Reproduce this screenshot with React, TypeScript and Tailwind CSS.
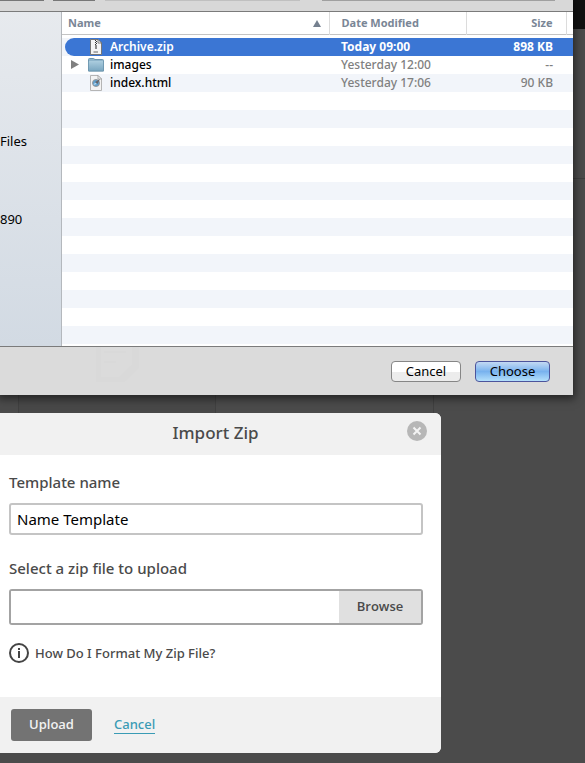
import type { ReactNode } from "react";

function ZipIcon() {
  return (
    <svg width="16" height="16" viewBox="0 0 16 16" aria-hidden="true">
      <path d="M2.5 .5h7.500l3.500 3.500v11.500h-11z" fill="#f4f4f4" stroke="#777" />
      <path d="M10 .5v3.500h3.500z" fill="#fff" stroke="#666" strokeWidth=".8" />
      <path d="M7 1h1v1H7zM8 2h1v1H8zM7 3h1v1H7zM8 4h1v1H8zM7 5h1v1H7z" fill="#333" />
      <path d="M7 6h2v4H7z" fill="#8a8a8a" />
      <path d="M5.500 13h4.500" stroke="#666" />
    </svg>
  );
}

function FolderIcon() {
  return (
    <svg width="16" height="16" viewBox="0 0 16 16" aria-hidden="true">
      <defs>
        <linearGradient id="folder" x1="0" y1="0" x2="0" y2="1">
          <stop offset="0" stopColor="#a9cbdd" />
          <stop offset="1" stopColor="#79a6c0" />
        </linearGradient>
      </defs>
      <path d="M.5 14V2.500q0-1 1-1h4q1 0 1 1h8q1 0 1 1V14z" fill="#8fb5cb" stroke="#6c95ae" />
      <path d="M.5 4.500h15V14H.5z" fill="url(#folder)" stroke="#6c95ae" strokeWidth=".7" />
      <path d="M1 4.500h14" stroke="#a9cbdd" />
    </svg>
  );
}

function HtmlIcon() {
  return (
    <svg width="16" height="16" viewBox="0 0 16 16" aria-hidden="true">
      <path d="M2.500 .5h7.500l3.500 3.500v11.500h-11z" fill="#f3f3f3" stroke="#b5b5b5" />
      <path d="M10 .5v3.500h3.500z" fill="#fff" stroke="#999" strokeWidth=".8" />
      <circle cx="8" cy="8" r="3.500" fill="#5a9fd0" stroke="#9a9a9a" />
      <path d="M5.500 10L7 7.500l2 1.500z" fill="#b9d9ee" />
      <path d="M7 7l5-3-2.500 5z" fill="#66666c" />
    </svg>
  );
}

type FileRow = {
  name: string;
  date: string;
  size: string;
  icon: ReactNode;
  folder?: boolean;
  selected?: boolean;
};

const files: FileRow[] = [
  { name: "Archive.zip", date: "Today 09:00", size: "898 KB", icon: <ZipIcon />, selected: true },
  { name: "images", date: "Yesterday 12:00", size: "--", icon: <FolderIcon />, folder: true },
  { name: "index.html", date: "Yesterday 17:06", size: "90 KB", icon: <HtmlIcon /> },
];

const emptyRows = Array.from({ length: 14 }, (_, i) => i);

function FileTable() {
  return (
    <table className="w-full table-fixed border-collapse text-left">
      <colgroup>
        <col />
        <col className="w-[137px]" />
        <col className="w-[100px]" />
        <col className="w-[7px]" />
      </colgroup>
      <thead className="text-[11px] leading-[22px] text-[#7a8696]">
        <tr className="border-b border-[#c4c4c4]">
          <th className="border-r border-[#dcdcdc] p-0 font-bold">
            <button type="button" className="flex w-full items-center justify-between pr-2 pl-1.5">
              Name
              <svg width="8" height="7" viewBox="0 0 8 7" aria-hidden="true">
                <path d="M4 0l4 7H0z" fill="#75808f" />
              </svg>
            </button>
          </th>
          <th className="border-r border-[#dcdcdc] py-0 pr-0 pl-3 font-bold">Date Modified</th>
          <th className="border-r border-[#dcdcdc] py-0 pr-[13px] pl-0 text-right font-bold">Size</th>
          <th className="p-0" />
        </tr>
        <tr className="h-[3px]">
          <td colSpan={4} className="p-0" />
        </tr>
      </thead>
      <tbody className="text-[12px] leading-[18px]">
        {files.map((f) => (
          <tr key={f.name} className="h-[18px] odd:bg-[#f2f5fa]">
            <td className="py-0 pr-0 pl-[3px]">
              <div
                className={
                  f.selected
                    ? "flex h-[18px] items-center rounded-l-full bg-[#3b76d4] pl-[5px] font-semibold text-white"
                    : "flex h-[18px] items-center pl-[5px] font-medium text-black"
                }
              >
                <span className="flex w-[18px] items-center">
                  {f.folder && (
                    <button type="button" aria-label={"Expand " + f.name}>
                      <svg width="9" height="9" viewBox="0 0 9 9" className="block">
                        <path d="M1 0l8 4.500L1 9z" fill="#808080" />
                      </svg>
                    </button>
                  )}
                </span>
                {f.icon}
                <span className="pl-1.5">{f.name}</span>
              </div>
            </td>
            <td className={f.selected ? "bg-[#3b76d4] py-0 pr-0 pl-3 font-bold text-white" : "py-0 pr-0 pl-3 font-medium text-[#808080]"}>
              {f.date}
            </td>
            <td className={f.selected ? "bg-[#3b76d4] py-0 pr-[13px] pl-0 text-right font-bold text-white" : "py-0 pr-[13px] pl-0 text-right font-medium text-[#808080]"}>
              {f.size}
            </td>
            <td className={f.selected ? "bg-[#3b76d4] p-0" : "p-0"} />
          </tr>
        ))}
        {emptyRows.map((i) => (
          <tr key={i} className="h-[18px] odd:bg-[#f2f5fa]">
            <td colSpan={4} className="p-0" />
          </tr>
        ))}
      </tbody>
    </table>
  );
}

function FileDialog() {
  return (
    <section
      aria-label="Choose a file"
      className="relative flex min-w-0 flex-1 flex-col bg-[#dbdbdb] font-['Noto_Sans','Open_Sans',sans-serif] shadow-[0_2px_8px_2px_rgba(0,0,0,0.5)]"
    >
      <div className="flex h-3 items-start border-b border-[#7b7b7b] bg-[#d8d8d8]">
        <div className="h-px w-11 bg-[#777]" />
        <div className="ml-[9px] h-px w-[42px] bg-[#777]" />
        <div className="ml-2.5 h-px w-[195px] bg-[#c0c0c0]" />
        <div className="mr-[18px] ml-[22px] h-px flex-1 bg-[#a0a0a0]" />
      </div>
      <div className="flex border-b border-[#7b7b7b]">
        <nav className="w-[62px] shrink-0 overflow-hidden border-r border-[#b4b8bd] bg-linear-to-b from-[#e7eaee] to-[#d2dae3] pt-30 text-[13px] leading-[18px] whitespace-nowrap">
          <div>Files</div>
          <div className="pt-15">890</div>
        </nav>
        <div className="min-w-0 flex-1 bg-white pb-0.5">
          <FileTable />
        </div>
      </div>
      <div className="flex items-start justify-between pb-[13px]">
        <svg width="50" height="35" viewBox="0 0 50 35" className="ml-[94px]" aria-hidden="true">
          <path d="M2 0v35h28l15-14V0h-7v18l-13 12H7V0z" fill="#d9d9d9" />
          <path d="M10 5h22M10 15h12" stroke="#d9d9d9" strokeWidth="2" />
        </svg>
        <div className="flex gap-3.5 pt-3.5 pr-[23px] text-[13px] leading-[18px]">
          <button type="button" className="h-[21px] w-[70px] rounded border border-[#868686] bg-linear-to-b from-white from-50% to-[#ececec] to-50%">
            Cancel
          </button>
          <button type="button" className="h-[21px] w-[75px] rounded border border-[#4c549c] bg-linear-to-b from-[#c3d9f3] via-[#78b2ee] to-[#b4e0fb]">
            Choose
          </button>
        </div>
      </div>
    </section>
  );
}

function ImportModal() {
  return (
    <form className="mr-36 overflow-hidden rounded-r-md bg-white text-[#4a4a4a]">
      <header className="flex h-[42px] items-start bg-[#f1f1f1] pr-3.5">
        <h1 className="flex-1 pt-2 pl-6 text-center text-[17px] leading-6 font-medium">Import Zip</h1>
        <button type="button" aria-label="Close" className="mt-2">
          <svg width="20" height="20" viewBox="0 0 20 20" className="block">
            <circle cx="10" cy="10" r="10" fill="#b7b7b7" />
            <path d="M6.500 6.500l7 7M13.500 6.500l-7 7" stroke="#f4f4f4" strokeWidth="2" />
          </svg>
        </button>
      </header>
      <div className="pt-[15px] pr-[18px] pb-[34px] pl-[9px]">
        <label htmlFor="template" className="block text-[15px] leading-6 font-medium">
          Template name
        </label>
        <input
          id="template"
          defaultValue="Name Template"
          className="mt-[9px] block h-8 w-full rounded-[3px] border-2 border-[#c4c4c4] bg-white px-1.5 text-[15px] leading-6 text-black"
        />
        <label htmlFor="zip" className="mt-[21px] block text-[15px] leading-6 font-medium">
          Select a zip file to upload
        </label>
        <div className="mt-[9px] flex h-9 overflow-hidden rounded-[3px] border-2 border-[#a3a3a3]">
          <input id="zip" className="min-w-0 flex-1 bg-white px-1.5 text-[15px]" />
          <button type="button" className="w-[82px] bg-[#e0e0e0] font-['Open_Sans',sans-serif] text-[13px] font-semibold">
            Browse
          </button>
        </div>
        <a href="#format" className="mt-[18px] flex items-center gap-1.5 text-[13px] leading-5 font-medium">
          <svg width="20" height="20" viewBox="0 0 20 20" aria-hidden="true">
            <circle cx="10" cy="10" r="9" fill="none" stroke="#444" strokeWidth="2" />
            <path d="M9 5h2v2H9zM9 8h2v7H9z" fill="#444" />
          </svg>
          How Do I Format My Zip File?
        </a>
      </div>
      <footer className="flex items-start gap-[22px] bg-[#f1f1f1] px-[11px] py-3">
        <button type="submit" className="h-8 w-[81px] rounded-[3px] bg-[#737373] font-['Open_Sans',sans-serif] text-[13px] font-semibold text-[#f1f1f1]">
          Upload
        </button>
        <a href="#cancel" className="mt-1.5 border-b border-[#3a9bb5] text-[13px] leading-[18px] font-medium text-[#3a9bb5]">
          Cancel
        </a>
      </footer>
    </form>
  );
}

export default function App() {
  return (
    <main className="min-h-screen overflow-hidden bg-[#4b4b4b] font-['Noto_Sans','Open_Sans',sans-serif]">
      <div className="flex">
        <FileDialog />
        <div className="flex w-3 flex-col">
          <div className="h-[29px] bg-[#111]" />
          <div className="h-[150px] border-b border-[#3f3f3f]" />
        </div>
      </div>
      <div className="flex h-[18px]">
        <div className="w-[19px] border-r border-[#404040]" />
        <div className="w-[197px] border-r border-[#404040] bg-[#484848]" />
        <div className="w-[218px] border-r border-[#404040]" />
      </div>
      <ImportModal />
    </main>
  );
}
